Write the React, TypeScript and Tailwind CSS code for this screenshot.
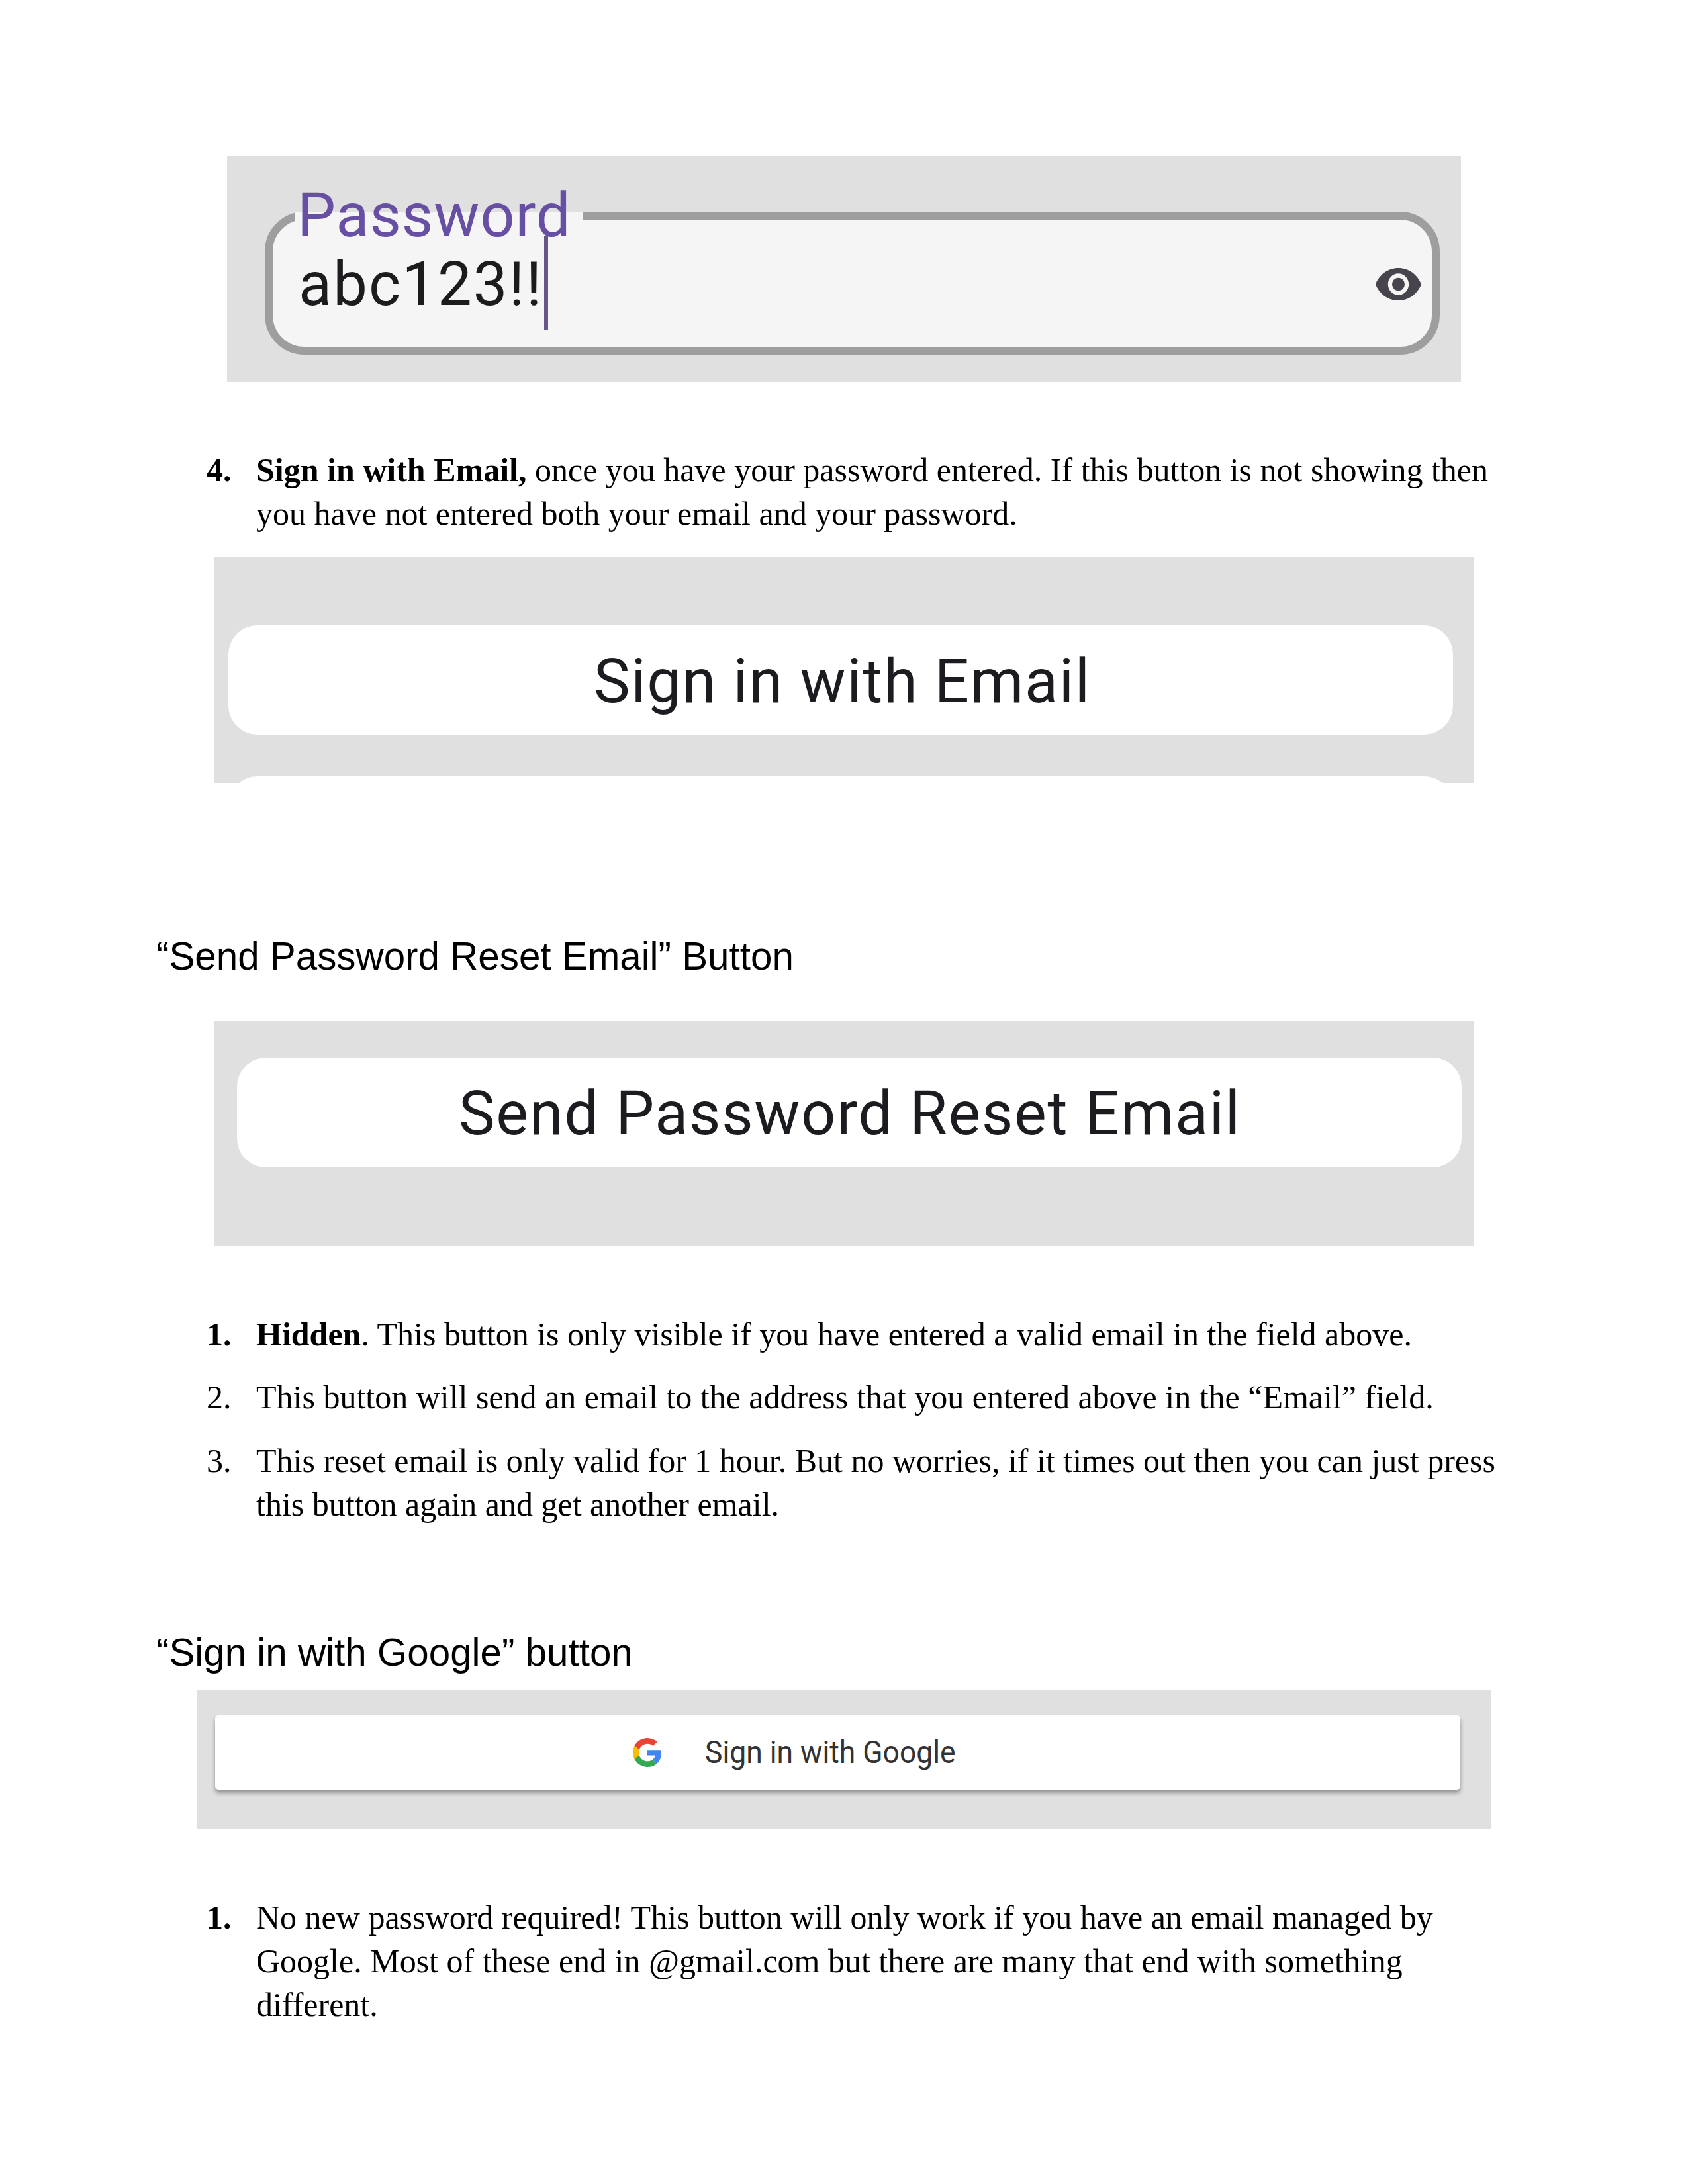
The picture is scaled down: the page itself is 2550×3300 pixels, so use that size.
import React from "react";

const serif = "font-['Liberation_Serif',serif] text-[50px] leading-[66px] text-black";
const heading = "ml-[236px] font-['Liberation_Sans',sans-serif] text-[58.33px] leading-[66px] whitespace-nowrap text-black";

function Item({ marker, bold, children, className = "" }: { marker: string; bold?: boolean; children: React.ReactNode; className?: string }) {
  return (
    <div className={`ml-[312px] flex ${serif} ${className}`}>
      <span className={bold ? "w-[75px] shrink-0 font-bold" : "w-[75px] shrink-0"}>{marker}</span>
      <p className="whitespace-nowrap">{children}</p>
    </div>
  );
}

function EyeIcon() {
  return (
    <svg viewBox="1 4.5 22 15" preserveAspectRatio="none" className="h-[49px] w-[69px]" fill="#47444d">
      <path d="M12 4.5C7 4.5 2.73 7.61 1 12c1.73 4.39 6 7.5 11 7.5s9.27-3.11 11-7.5c-1.73-4.39-6-7.5-11-7.5zM12 17c-2.76 0-5-2.24-5-5s2.24-5 5-5 5 2.24 5 5-2.24 5-5 5zm0-8c-1.66 0-3 1.34-3 3s1.34 3 3 3 3-1.34 3-3-1.34-3-3-3z" />
    </svg>
  );
}

function GoogleIcon() {
  return (
    <svg viewBox="0 0 48 48" className="h-[44px] w-[44px]" preserveAspectRatio="none">
      <path fill="#EA4335" d="M24 9.5c3.54 0 6.71 1.22 9.21 3.6l6.85-6.85C35.9 2.38 30.47 0 24 0 14.62 0 6.51 5.38 2.56 13.22l7.98 6.19C12.43 13.72 17.74 9.5 24 9.5z" />
      <path fill="#4285F4" d="M46.98 24.55c0-1.57-.15-3.09-.38-4.55H24v9.02h12.94c-.58 2.96-2.26 5.48-4.78 7.18l7.73 6c4.51-4.18 7.09-10.36 7.09-17.65z" />
      <path fill="#FBBC05" d="M10.53 28.59c-.48-1.45-.76-2.99-.76-4.59s.27-3.14.76-4.59l-7.98-6.19C.92 16.46 0 20.12 0 24c0 3.88.92 7.54 2.56 10.78l7.97-6.19z" />
      <path fill="#34A853" d="M24 48c6.48 0 11.93-2.13 15.89-5.81l-7.73-6c-2.15 1.45-4.92 2.3-8.16 2.3-6.26 0-11.57-4.22-13.47-9.91l-7.98 6.19C6.51 42.62 14.62 48 24 48z" />
    </svg>
  );
}

export default function App() {
  return (
    <div className="flex h-[3300px] w-[2550px] flex-col overflow-hidden bg-white">
      <section className="mt-[236px] ml-[343px] h-[341px] w-[1864px] bg-[#e0e0e0] pt-[84px] pl-[57px]">
        <div className="relative h-[216px] w-[1775px] rounded-[60px] border-[12.5px] border-[#9e9e9e] bg-[#f5f5f5]">
          <div className="absolute -top-[12.5px] left-[34px] h-[26px] w-[435px] bg-[#f5f5f5]" />
          <span className="absolute -top-[60px] left-[37px] font-[Roboto,sans-serif] text-[92px] leading-[108px] tracking-[0.9px] whitespace-nowrap text-[#6750a4]">Password</span>
          <span className="absolute top-[44px] left-[39px] font-[Roboto,sans-serif] text-[92px] leading-[108px] tracking-[2.1px] whitespace-nowrap text-[#1d1b1e]">abc123!!</span>
          <div className="absolute top-[25px] left-[410px] h-[141px] w-[6px] bg-[#675789]" />
          <div className="absolute top-[73px] left-[1666px]">
            <EyeIcon />
          </div>
        </div>
      </section>

      <Item marker="4." bold className="mt-[100px]">
        <b>Sign in with Email,</b> once you have your password entered. If this button is not showing then
        <br />
        you have not entered both your email and your password.
      </Item>

      <section className="mt-[33px] ml-[323px] flex h-[341px] w-[1904px] flex-col overflow-hidden bg-[#e0e0e0] pt-[103px] pl-[22px]">
        <div className="h-[165px] w-[1850px] shrink-0 rounded-[44px] bg-white pt-[31px] pl-[552px] font-[Roboto,sans-serif] text-[92px] leading-[108px] tracking-[1.65px] whitespace-nowrap text-[#1d1b20]">
          Sign in with Email
        </div>
        <div className="mt-[63px] h-[165px] w-[1850px] shrink-0 rounded-[44px] bg-white" />
      </section>

      <h2 className={`mt-[229px] ${heading}`}>“Send Password Reset Email” Button</h2>

      <section className="mt-[64px] ml-[323px] h-[341px] w-[1904px] bg-[#e0e0e0] pt-[56px] pl-[35px]">
        <div className="h-[166px] w-[1850px] rounded-[44px] bg-white pt-[31px] pl-[335px] font-[Roboto,sans-serif] text-[92px] leading-[108px] tracking-[1.65px] whitespace-nowrap text-[#1d1b20]">
          Send Password Reset Email
        </div>
      </section>

      <div className="mt-[100px] flex flex-col gap-[29px]">
        <Item marker="1." bold>
          <b>Hidden</b>. This button is only visible if you have entered a valid email in the field above.
        </Item>
        <Item marker="2.">This button will send an email to the address that you entered above in the “Email” field.</Item>
        <Item marker="3." className="mt-px">
          This reset email is only valid for 1 hour. But no worries, if it times out then you can just press
          <br />
          this button again and get another email.
        </Item>
      </div>

      <h2 className={`mt-[158px] ${heading}`}>“Sign in with Google” button</h2>

      <section className="mt-[24px] ml-[297px] h-[210px] w-[1956px] bg-[#e0e0e0] pt-[38px] pl-[28px]">
        <div className="flex h-[112px] w-[1881px] items-center rounded-[5px] bg-white pl-[631px] shadow-[0_5px_6px_rgba(0,0,0,0.35)]">
          <GoogleIcon />
          <span className="ml-[65px] origin-left scale-x-[0.907] font-[Roboto,sans-serif] text-[49px] leading-[58px] whitespace-nowrap text-[#333333]">Sign in with Google</span>
        </div>
      </section>

      <Item marker="1." bold className="mt-[100px]">
        No new password required! This button will only work if you have an email managed by
        <br />
        Google. Most of these end in @gmail.com but there are many that end with something
        <br />
        different.
      </Item>
    </div>
  );
}
